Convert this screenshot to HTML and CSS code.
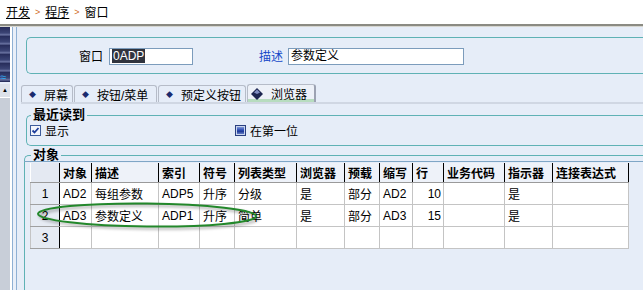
FILE: index.html
```html
<!DOCTYPE html>
<html lang="zh">
<head>
  <meta charset="UTF-8">
  <title>窗口</title>
  <link rel="stylesheet" href="styles.css">
</head>
<body>
  <div class="topbar">
    <a class="crumb">开发</a><span class="sep">&gt;</span><a class="crumb">程序</a><span class="sep">&gt;</span><span class="crumb-cur">窗口</span>
  </div>

  <div class="layout">
    <div class="side">
      <div class="side-top"><span class="side-icon">≈</span></div>
      <div class="side-btn">▲</div>
      <div class="side-rest"></div>
    </div>
    <div class="rail"></div>

    <div class="main">
      <!-- cabecera -->
      <div class="head-box">
        <label class="lbl lbl-win">窗口</label>
        <div class="inp inp-win"><span class="sel">0ADP</span></div>
        <label class="lbl lbl-desc">描述</label>
        <div class="inp inp-desc">参数定义</div>
      </div>

      <!-- pestañas -->
      <div class="tabs">
        <div class="tab tab1"><span class="dot">◆</span>屏幕</div>
        <div class="tab tab2"><span class="dot">◆</span>按钮/菜单</div>
        <div class="tab tab3"><span class="dot">◆</span>预定义按钮</div>
        <div class="tab tab4 active">
          <svg class="tab-icon" width="12" height="12" viewBox="0 0 12 12">
            <polygon points="6,0 12,6 6,12 0,6" fill="#1c2550"/>
            <polygon points="6,1.5 9,4.5 6,6 3,4.5" fill="#7f8cc0"/>
          </svg>浏览器
        </div>
      </div>

      <fieldset class="group recent">
        <legend>最近读到</legend>
        <div class="checks">
          <label class="chk"><span class="box checked">
            <svg width="9" height="9" viewBox="0 0 9 9"><path d="M1.5 4.5 L3.5 6.5 L7.5 2" stroke="#1d3d9a" stroke-width="1.8" fill="none"/></svg>
          </span>显示</label>
          <label class="chk chk-first"><span class="box filled"></span>在第一位</label>
        </div>
      </fieldset>

      <fieldset class="group objects">
        <legend>对象</legend>
        <div class="grid-wrap">
          <table class="grid">
            <colgroup>
              <col style="width:29px"><col style="width:32px"><col style="width:67px"><col style="width:41px">
              <col style="width:35px"><col style="width:62px"><col style="width:48px"><col style="width:35px">
              <col style="width:33px"><col style="width:31px"><col style="width:61px"><col style="width:48px">
              <col style="width:76px">
            </colgroup>
            <thead>
              <tr>
                <th class="corner"></th><th>对象</th><th>描述</th><th>索引</th><th>符号</th><th>列表类型</th>
                <th>浏览器</th><th>预载</th><th>缩写</th><th>行</th><th>业务代码</th><th>指示器</th><th>连接表达式</th>
              </tr>
            </thead>
            <tbody>
              <tr>
                <td class="num">1</td><td>AD2</td><td>每组参数</td><td>ADP5</td><td>升序</td><td>分级</td>
                <td>是</td><td>部分</td><td>AD2</td><td class="right">10</td><td></td><td>是</td><td></td>
              </tr>
              <tr>
                <td class="num">2</td><td>AD3</td><td>参数定义</td><td>ADP1</td><td>升序</td><td>简单</td>
                <td>是</td><td>部分</td><td>AD3</td><td class="right">15</td><td></td><td>是</td><td></td>
              </tr>
              <tr>
                <td class="num">3</td><td></td><td></td><td></td><td></td><td></td>
                <td></td><td></td><td></td><td></td><td></td><td></td><td></td>
              </tr>
            </tbody>
          </table>
        </div>
      </fieldset>
    </div>
  </div>

  <svg class="mark" width="240" height="40" viewBox="0 0 240 40">
    <ellipse cx="112" cy="17" rx="109" ry="11.5" transform="rotate(0.6 112 17)" fill="none" stroke="#23882b" stroke-width="2"/>
  </svg>
</body>
</html>
```

FILE: styles.css
```css
body {
  margin: 0;
  width: 643px;
  height: 290px;
  overflow: hidden;
  position: relative;
  background: #e6edf8;
  font-family: "Liberation Sans", "Noto Sans CJK SC", sans-serif;
  font-size: 12px;
  color: #000;
}

/* barra superior */
.topbar {
  height: 26px;
  background: #fff;
  border-bottom: 2px solid #8b8b83;
  box-shadow: 0 1px 0 #d6d6d0;
  display: flex;
  align-items: center;
  padding: 0 0 2px 6px;
  box-sizing: border-box;
}

.crumb {
  text-decoration: underline;
  color: #000;
}

.sep {
  font-size: 9px;
  color: #d06a1a;
  margin: 1px 5px 0 5px;
}

.layout {
  display: flex;
  height: 263px;
  margin-top: 1px;
}

/* barra lateral */
.side {
  width: 10px;
  display: flex;
  flex-direction: column;
  border-right: 2px solid #fff;
}

.side-top {
  height: 55px;
  background: repeating-linear-gradient(180deg, #262c5a 0, #3b4475 6px, #6f78a6 8px, #2a3160 9px);
  position: relative;
}

.side-icon {
  position: absolute;
  left: 0;
  bottom: 0;
  font-size: 11px;
  line-height: 10px;
  color: #2fa8f0;
}

.side-btn {
  height: 13px;
  margin-top: 2px;
  background: #dde2ea;
  font-size: 6px;
  line-height: 13px;
  padding-left: 2px;
}

.side-rest {
  flex: 1;
  background: #c8ced8;
  border-top: 1px solid #fff;
}

.rail {
  width: 3px;
  border-left: 1px solid #8fb0d4;
  border-right: 1px solid #8fb0d4;
  background: #e9eff9;
}

.main {
  flex: 1;
  overflow: hidden;
  padding-left: 2px;
}

/* cabecera */
.head-box {
  margin: 10px -20px 0 7px;
  height: 35px;
  border: 1px solid #5fb2b5;
  border-right: none;
  border-radius: 5px 0 0 5px;
  display: flex;
  align-items: center;
}

.lbl-win {
  margin-left: 52px;
}

.lbl-desc {
  margin-left: 66px;
  color: #1448c8;
}

.inp {
  height: 15px;
  border: 1px solid #7c9cbc;
  background: #fff;
  line-height: 15px;
  padding-left: 2px;
  margin-left: 6px;
  margin-top: 1px;
}

.inp-win {
  width: 80px;
}

.inp-desc {
  width: 172px;
  margin-left: 5px;
}

.sel {
  background: #30343e;
  color: #fff;
  padding: 0 1px;
}

/* pestañas */
.tabs {
  display: flex;
  align-items: flex-end;
  margin: 10px -20px 0 2px;
  height: 18px;
  border-bottom: 2px solid #d0d7e3;
  gap: 1px;
}

.tab {
  height: 17px;
  box-sizing: border-box;
  border: 1px solid #b6bcc8;
  border-bottom: none;
  border-radius: 3px 3px 0 0;
  display: flex;
  align-items: center;
  padding-left: 7px;
  font-size: 12px;
}

.tab1 { width: 52px; }
.tab2 { width: 83px; }
.tab3 { width: 88px; }
.tab4 { width: 69px; }

.dot {
  font-size: 7px;
  color: #1b2a6e;
  margin-right: 8px;
}

.tab.active {
  height: 18px;
  background: #edf1f8;
  border-right: 2px solid #9ca2b2;
  box-shadow: inset 0 -3px 0 #b7dcbf;
  padding-left: 3px;
}

.tab-icon {
  margin-right: 8px;
}

/* grupos */
.group {
  border: 1px solid #5fb2b5;
  border-right: none;
  border-radius: 5px 0 0 5px;
  margin: 0 -20px 0 7px;
  padding: 0 0 0 3px;
  min-width: 0;
}

.group legend {
  font-weight: bold;
  font-size: 13px;
  padding: 0 2px;
  margin-left: 1px;
  line-height: 14px;
}

.recent {
  margin-top: 4px;
  padding: 1px 0 8px 3px;
}

.checks {
  display: flex;
  height: 14px;
}

.chk {
  display: flex;
  align-items: center;
}

.chk-first {
  margin-left: 166px;
}

.box {
  width: 11px;
  height: 11px;
  box-sizing: border-box;
  border: 1px solid #3c5c9c;
  background: #f2f5fb;
  margin-right: 4px;
  display: flex;
  align-items: center;
  justify-content: center;
}

.box.filled {
  background: linear-gradient(180deg, #9aaee0 0, #2c4cb4 45%, #1f3a98 60%, #7f96d8 100%);
  border-color: #2a3f80;
  box-shadow: inset 0 0 0 1px #c8d4ee;
}

.objects {
  margin-top: 3px;
  margin-left: 5px;
  height: 220px;
  padding-left: 5px;
}

.objects legend {
  line-height: 12px;
}

.grid-wrap {
  border-top: 1px solid #7fa6c6;
  margin: 0 0 0 -6px;
  padding: 1px 0 0 6px;
}

/* tabla */
.grid {
  border-collapse: collapse;
  table-layout: fixed;
  width: 598px;
  background: #fff;
}

.grid th {
  height: 19px;
  background: #eef2f9;
  font-weight: bold;
  text-align: left;
  padding: 0 0 0 3px;
  border-right: 1px solid #000;
  border-bottom: 1px solid #9a9a9a;
  white-space: nowrap;
  overflow: hidden;
}

.grid th.corner {
  background: #e4e9f2;
}

.grid td {
  height: 21px;
  padding: 0 0 0 3px;
  border: 1px solid #c4c4c4;
  white-space: nowrap;
  overflow: hidden;
}

.grid td.num {
  background: #e6ebf3;
  text-align: center;
  border-right: 1px solid #000;
  border-bottom: 1px solid #a0a0a0;
  padding: 0;
}

.grid td.right {
  text-align: right;
  padding: 0 2px 0 0;
}

/* marca verde */
.mark {
  position: absolute;
  left: 35px;
  top: 198px;
  filter: drop-shadow(2px 2px 1.5px rgba(0, 0, 0, 0.35));
}
```
